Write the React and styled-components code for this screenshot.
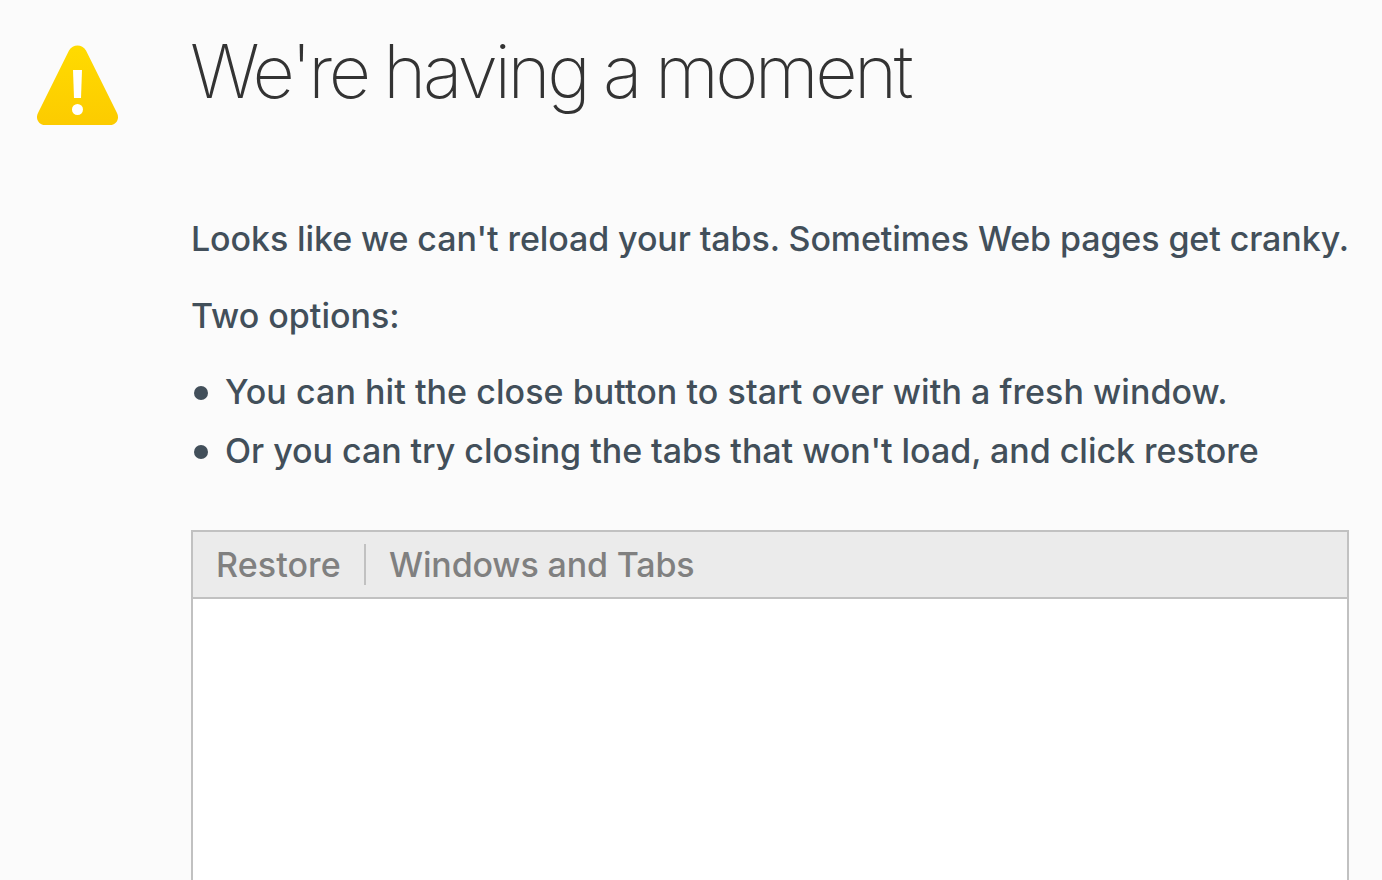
import React from "react";
import styled, { createGlobalStyle } from "styled-components";

const Global = createGlobalStyle`
  html, body { margin: 0; background: #fbfbfb; height: 880px; overflow: hidden; }
  * { box-sizing: border-box; }
`;
const Page = styled.main`
  display: grid;
  grid-template-columns: 154px 1158px;
  padding-left: 37px;
  width: 1382px;
  height: 880px;
  overflow: hidden;
  background: #fbfbfb;
  color: #424f5a;
  font-family: Inter, sans-serif;
  font-weight: 500;
`;
const WarningIcon = styled.svg`
  width: 82px;
  height: 82px;
  margin-top: 44px;
`;
const Content = styled.section`
  display: flex;
  flex-direction: column;
`;
const Title = styled.h1`
  margin: 29px 0 0 -1px;
  height: 180px;
  font: 200 73.5px/86px Inter, sans-serif;
  color: #333;
  white-space: nowrap;
`;
const Line = styled.span`
  display: inline-block;
  white-space: nowrap;
  letter-spacing: ${(p) => p.$spacing || 0}px;
  word-spacing: ${(p) => p.$gap || 0}px;
`;
const Paragraph = styled.p`
  margin: 0 0 17px;
  font-size: 34px;
  line-height: 60px;
  height: 60px;
`;
const Options = styled.ul`
  list-style: none;
  margin: -1px 0 0;
  padding: 0;
  height: 168px;
`;
const Option = styled.li`
  display: flex;
  align-items: center;
  font-size: 34px;
  line-height: 59px;
  height: 59px;
  &::before {
    content: "";
    width: 14px;
    height: 14px;
    margin: 2px 17px 0 3px;
    border-radius: 50%;
    background: #424f5a;
  }
`;
const TabList = styled.div`
  height: 400px;
  border: 2px solid #c1c1c1;
  background: #fff;
`;
const Header = styled.div`
  display: flex;
  align-items: center;
  height: 67px;
  border-bottom: 2px solid #c1c1c1;
  background: #ebebeb;
  color: #808080;
  font-size: 34px;
  line-height: 59px;
`;
const HeaderCell = styled.div`
  width: ${(p) => p.$width}px;
  padding-left: ${(p) => p.$inset}px;
  white-space: nowrap;
`;
const Divider = styled.div`
  width: 2px;
  height: 41px;
  margin-bottom: 1px;
  background: #c1c1c1;
`;

export default function App() {
  return (
    <>
      <Global />
      <Page>
        <WarningIcon viewBox="0 0 82 82" aria-hidden="true">
          <defs>
            <linearGradient id="warning" x1="0" y1="0" x2="0" y2="1">
              <stop offset="0" stopColor="#ffdb00" />
              <stop offset="1" stopColor="#fccb00" />
            </linearGradient>
          </defs>
          <path fill="url(#warning)" d="M32 6.5C36-.3 45-.3 49 6.5L80 69C83 75 79 81 73 81H8C2 81-2 75 1 69Z" />
          <path fill="#fff" d="M36 26H45L44 54H37Z" />
          <circle cx="40.5" cy="65.5" r="5.5" fill="#fff" />
        </WarningIcon>
        <Content>
          <Title><Line $spacing={-3.5} $gap={-1.3}>We're having a moment</Line></Title>
          <Paragraph><Line $spacing={-0.1}>Looks like we can't reload your tabs. Sometimes Web pages get cranky.</Line></Paragraph>
          <Paragraph><Line>Two options:</Line></Paragraph>
          <Options>
            <Option><Line $spacing={0.06}>You can hit the close button to start over with a fresh window.</Line></Option>
            <Option><Line $spacing={-0.04}>Or you can try closing the tabs that won't load, and click restore</Line></Option>
          </Options>
          <TabList>
            <Header>
              <HeaderCell $width={171} $inset={23}><Line $spacing={0.1}>Restore</Line></HeaderCell>
              <Divider />
              <HeaderCell $width={400} $inset={23}><Line $spacing={-0.15}>Windows and Tabs</Line></HeaderCell>
            </Header>
          </TabList>
        </Content>
      </Page>
    </>
  );
}
